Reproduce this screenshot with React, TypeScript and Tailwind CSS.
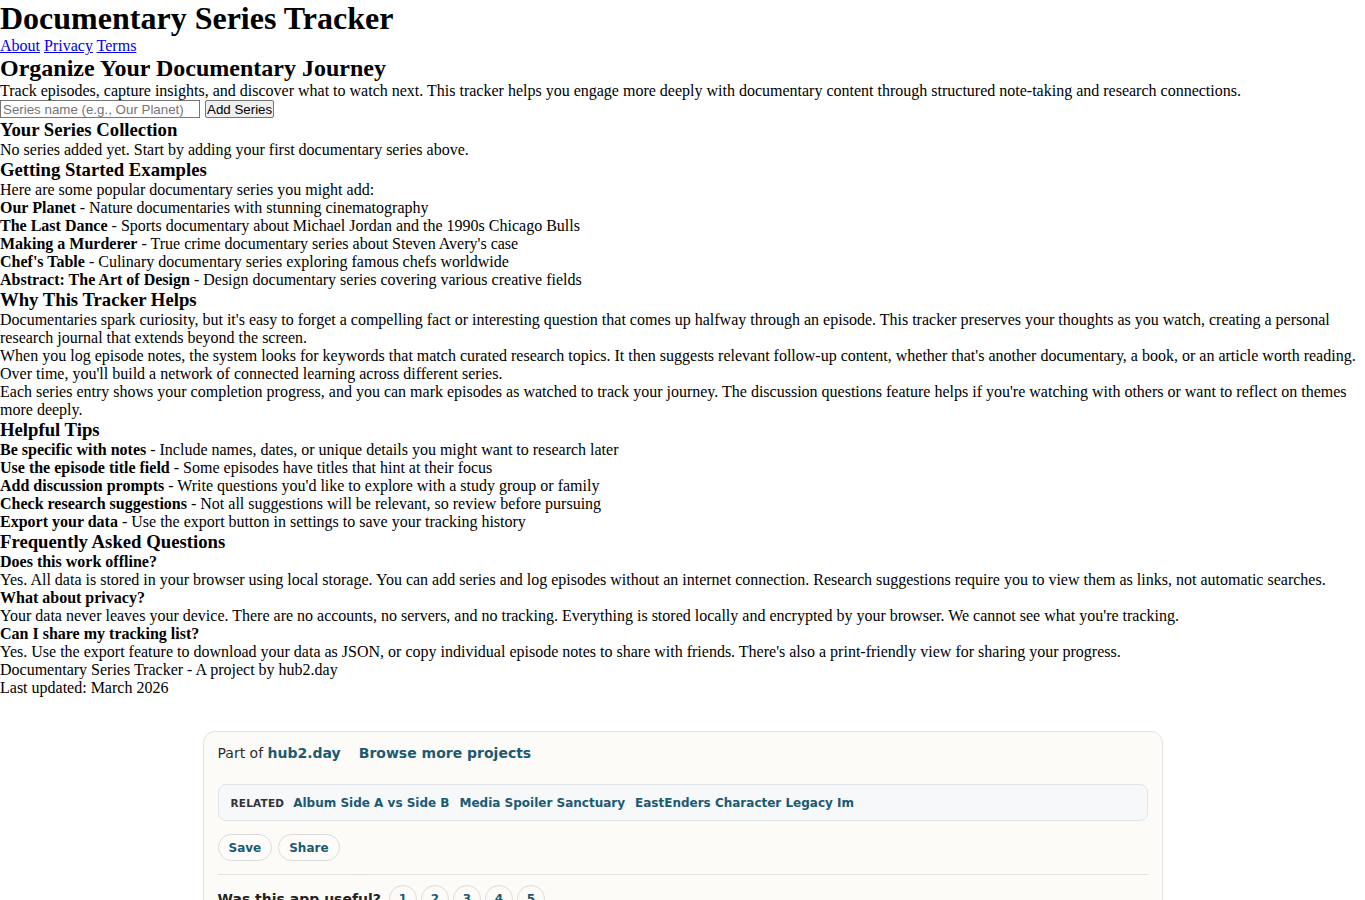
import React from "react";

const examples = [
  ["Our Planet", "Nature documentaries with stunning cinematography"],
  ["The Last Dance", "Sports documentary about Michael Jordan and the 1990s Chicago Bulls"],
  ["Making a Murderer", "True crime documentary series about Steven Avery's case"],
  ["Chef's Table", "Culinary documentary series exploring famous chefs worldwide"],
  ["Abstract: The Art of Design", "Design documentary series covering various creative fields"],
];

const tips = [
  ["Be specific with notes", "Include names, dates, or unique details you might want to research later"],
  ["Use the episode title field", "Some episodes have titles that hint at their focus"],
  ["Add discussion prompts", "Write questions you'd like to explore with a study group or family"],
  ["Check research suggestions", "Not all suggestions will be relevant, so review before pursuing"],
  ["Export your data", "Use the export button in settings to save your tracking history"],
];

const faqs = [
  [
    "Does this work offline?",
    "Yes. All data is stored in your browser using local storage. You can add series and log episodes without an internet connection. Research suggestions require you to view them as links, not automatic searches.",
  ],
  [
    "What about privacy?",
    "Your data never leaves your device. There are no accounts, no servers, and no tracking. Everything is stored locally and encrypted by your browser. We cannot see what you're tracking.",
  ],
  [
    "Can I share my tracking list?",
    "Yes. Use the export feature to download your data as JSON, or copy individual episode notes to share with friends. There's also a print-friendly view for sharing your progress.",
  ],
];

const related = ["Album Side A vs Side B", "Media Spoiler Sanctuary", "EastEnders Character Legacy Im"];

const H3 = ({ children }: { children: React.ReactNode }) => (
  <h3 className="text-[18.72px] font-bold leading-[22px]">{children}</h3>
);

const HubFooter: React.FC = () => (
  <div className="mx-auto mt-[34px] w-[960px] rounded-xl border border-[#e4e2dc] bg-[#fcfbf8] px-[14px] pt-[11px] font-['DejaVu_Sans',sans-serif] text-[14px] leading-[20px] text-[#2d2d2d]">
    <div className="flex items-center gap-[18px]">
      <span>
        Part of <a className="font-bold text-[#1c5a72]">hub2.day</a>
      </span>
      <a className="font-bold text-[#1c5a72]">Browse more projects</a>
    </div>
    <div className="mt-[21px] flex h-[37px] items-center gap-[9px] rounded-lg border border-[#e1e5ea] bg-[#f6f8fa] px-[12px] text-[12px]">
      <span className="text-[10.5px] font-bold tracking-[0.2px] text-[#333]">RELATED</span>
      <div className="flex gap-[10px]">
        {related.map((r) => (
          <a key={r} className="font-bold text-[#1c5a72]">
            {r}
          </a>
        ))}
      </div>
    </div>
    <div className="mt-[13px] flex gap-[6px]">
      {["Save", "Share"].map((b) => (
        <button
          key={b}
          className="h-[27px] rounded-full border border-[#dcdcd6] bg-white/40 px-[10px] text-[12px] font-bold text-[#1c5a72]"
        >
          {b}
        </button>
      ))}
    </div>
    <div className="mt-[13px] flex items-center gap-[8px] border-t border-[#e4e2dc] pt-[10px]">
      <span className="font-bold text-[14px] text-[#222]">Was this app useful?</span>
      <div className="flex gap-[4px]">
        {[1, 2, 3, 4, 5].map((n) => (
          <button
            key={n}
            className="h-[28px] w-[28px] rounded-full border border-[#dcdcd6] text-[12px] font-bold text-[#1c5a72]"
          >
            {n}
          </button>
        ))}
      </div>
    </div>
    <div className="h-[20px]" />
  </div>
);

export default function App() {
  return (
    <div className="bg-white pb-8 font-['Liberation_Serif',serif] text-[16px] leading-[18px] text-black">
      <h1 className="text-[32px] font-bold leading-[37px]">Documentary Series Tracker</h1>
      <nav>
        <a href="#" className="text-[#0000ee] underline">About</a>{" "}
        <a href="#" className="text-[#0000ee] underline">Privacy</a>{" "}
        <a href="#" className="text-[#0000ee] underline">Terms</a>
      </nav>
      <h2 className="text-[24px] font-bold leading-[27px]">Organize Your Documentary Journey</h2>
      <p>
        Track episodes, capture insights, and discover what to watch next. This tracker helps you engage more
        deeply with documentary content through structured note-taking and research connections.
      </p>
      <div className="flex h-[19px] items-start gap-[5px] font-['Liberation_Sans',sans-serif] text-[13.33px] leading-[15px]">
        <input
          placeholder="Series name (e.g., Our Planet)"
          className="h-[18px] w-[200px] border border-[#767676] px-[2px] placeholder:text-[#757575]"
        />
        <button className="h-[18px] rounded-[2px] border border-[#767676] bg-[#efefef] px-[1px]">Add Series</button>
      </div>

      <H3>Your Series Collection</H3>
      <p>No series added yet. Start by adding your first documentary series above.</p>

      <H3>Getting Started Examples</H3>
      <p>Here are some popular documentary series you might add:</p>
      <ul>
        {examples.map(([t, d]) => (
          <li key={t}>
            <strong>{t}</strong> - {d}
          </li>
        ))}
      </ul>

      <H3>Why This Tracker Helps</H3>
      <p>
        Documentaries spark curiosity, but it's easy to forget a compelling fact or interesting question that comes
        up halfway through an episode. This tracker preserves your thoughts as you watch, creating a personal
        research journal that extends beyond the screen.
      </p>
      <p>
        When you log episode notes, the system looks for keywords that match curated research topics. It then
        suggests relevant follow-up content, whether that's another documentary, a book, or an article worth
        reading. Over time, you'll build a network of connected learning across different series.
      </p>
      <p>
        Each series entry shows your completion progress, and you can mark episodes as watched to track your
        journey. The discussion questions feature helps if you're watching with others or want to reflect on themes
        more deeply.
      </p>

      <H3>Helpful Tips</H3>
      <ul>
        {tips.map(([t, d]) => (
          <li key={t}>
            <strong>{t}</strong> - {d}
          </li>
        ))}
      </ul>

      <H3>Frequently Asked Questions</H3>
      {faqs.map(([q, a]) => (
        <div key={q}>
          <h4 className="font-bold">{q}</h4>
          <p>{a}</p>
        </div>
      ))}

      <footer>
        <p>Documentary Series Tracker - A project by hub2.day</p>
        <p>Last updated: March 2026</p>
      </footer>

      <HubFooter />
    </div>
  );
}
